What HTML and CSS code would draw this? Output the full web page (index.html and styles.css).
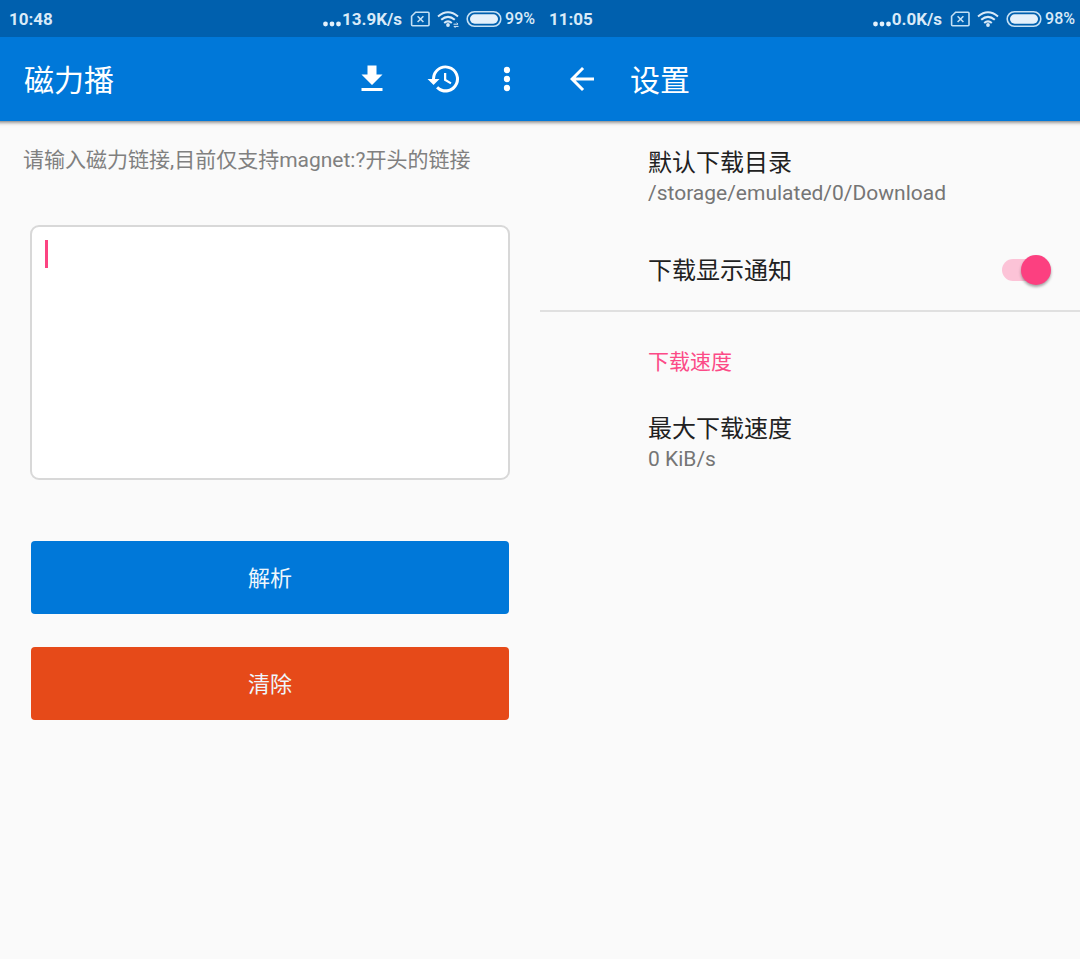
FILE: index.html
```html
<!DOCTYPE html>
<html lang="zh-CN">
<head>
<meta charset="utf-8">
<meta name="viewport" content="width=device-width, initial-scale=1">
<title>磁力播</title>
<link rel="stylesheet" href="styles.css">
</head>
<body>
<div class="screens">
  <section class="screen">
    <div class="status">
      <span class="status-text">10:48</span>
      <div class="status-right">
        <svg class="dots" viewBox="0 0 19 22" aria-hidden="true"><circle cx="3.5" cy="16" r="2.4"/><circle cx="10" cy="16" r="2.4"/><circle cx="16.5" cy="16" r="2.4"/></svg>
        <span class="status-text speed">13.9K/s</span>
        <svg class="sim" viewBox="0 0 20 22" aria-hidden="true"><path d="M5.6 4.3H18q1 0 1 1v11.4q0 1-1 1H2.6q-1 0-1-1V8.3Z"/><path d="m7.6 8.2 5.8 5.8m0-5.8-5.8 5.8"/></svg>
        <svg class="wifi" viewBox="0 0 22 22" aria-hidden="true"><path d="M1 8.4Q11 .2 21 8.4M4.2 11.8Q11 6 17.8 11.8M7.2 15Q11 11.8 14.8 15"/><circle cx="11" cy="17" r="1.9"/><path class="wifi-link" d="M16.5 16.2h4.5l-1.4-1.4M21.5 18.4H17l1.4 1.4"/></svg>
        <svg class="battery" viewBox="0 0 36 22" aria-hidden="true"><rect class="battery-shell" x="1.2" y="3.7" width="33.6" height="14.6" rx="7.3"/><rect class="battery-fill" x="4" y="6.3" width="28" height="9.4" rx="4.7"/></svg>
        <span class="status-text percent">99%</span>
      </div>
    </div>
    <header class="appbar">
      <h1 class="appbar-title">磁力播</h1>
      <div class="actions">
        <button class="action" aria-label="下载"><svg class="icon" viewBox="0 0 24 24"><path d="M19 9h-4V3H9v6H5l7 7zM5 18v2h14v-2z"/></svg></button>
        <button class="action" aria-label="历史"><svg class="icon" viewBox="0 0 24 24"><path d="M13 3a9 9 0 0 0-9 9H1l3.9 3.9.1.1L9 12H6a7 7 0 1 1 2.1 4.9l-1.4 1.5A9 9 0 1 0 13 3zm-1 5v5l4.3 2.5.7-1.2-3.5-2.1V8z"/></svg></button>
        <button class="action action-narrow" aria-label="更多"><svg class="icon" viewBox="0 0 24 24"><circle cx="12" cy="6" r="2.1"/><circle cx="12" cy="12" r="2.1"/><circle cx="12" cy="18" r="2.1"/></svg></button>
      </div>
    </header>
    <main class="form">
      <label class="hint" for="magnet">请输入磁力链接,目前仅支持magnet:?开头的链接</label>
      <div class="field">
        <textarea class="input" id="magnet"></textarea>
        <span class="caret"></span>
      </div>
      <button class="button button-parse">解析</button>
      <button class="button button-clear">清除</button>
    </main>
  </section>

  <section class="screen">
    <div class="status">
      <span class="status-text">11:05</span>
      <div class="status-right">
        <svg class="dots" viewBox="0 0 19 22" aria-hidden="true"><circle cx="3.5" cy="16" r="2.4"/><circle cx="10" cy="16" r="2.4"/><circle cx="16.5" cy="16" r="2.4"/></svg>
        <span class="status-text speed">0.0K/s</span>
        <svg class="sim" viewBox="0 0 20 22" aria-hidden="true"><path d="M5.6 4.3H18q1 0 1 1v11.4q0 1-1 1H2.6q-1 0-1-1V8.3Z"/><path d="m7.6 8.2 5.8 5.8m0-5.8-5.8 5.8"/></svg>
        <svg class="wifi" viewBox="0 0 22 22" aria-hidden="true"><path d="M1 8.4Q11 .2 21 8.4M4.2 11.8Q11 6 17.8 11.8M7.2 15Q11 11.8 14.8 15"/><circle cx="11" cy="17" r="1.9"/></svg>
        <svg class="battery" viewBox="0 0 36 22" aria-hidden="true"><rect class="battery-shell" x="1.2" y="3.7" width="33.6" height="14.6" rx="7.3"/><rect class="battery-fill" x="4" y="6.3" width="28" height="9.4" rx="4.7"/></svg>
        <span class="status-text percent">98%</span>
      </div>
    </div>
    <header class="appbar">
      <button class="back" aria-label="返回"><svg class="icon" viewBox="0 0 24 24"><path d="M20 11H7.8l5.6-5.6L12 4l-8 8 8 8 1.4-1.4L7.8 13H20z"/></svg></button>
      <h1 class="appbar-title">设置</h1>
    </header>
    <main class="settings">
      <div class="item item-first">
        <div class="item-title">默认下载目录</div>
        <div class="item-value">/storage/emulated/0/Download</div>
      </div>
      <div class="item item-switch">
        <label class="item-title" for="notify">下载显示通知</label>
        <input class="switch" id="notify" type="checkbox" role="switch" checked>
      </div>
      <h2 class="category">下载速度</h2>
      <div class="item">
        <div class="item-title">最大下载速度</div>
        <div class="item-value">0 KiB/s</div>
      </div>
    </main>
  </section>
</div>
</body>
</html>
```

FILE: styles.css
```css
* {
  box-sizing: border-box;
}

body {
  margin: 0;
  background: #fafafa;
  font-family: Roboto, "Noto Sans CJK SC", sans-serif;
  font-size: 21px;
  color: #212121;
}

button {
  border: 0;
  padding: 0;
  font-family: inherit;
  cursor: pointer;
}

.screens {
  display: grid;
  grid-template-columns: 1fr 1fr;
  min-height: 100vh;
}

/* Status bar */
.status {
  display: flex;
  align-items: center;
  justify-content: space-between;
  height: 37px;
  padding: 0 5px 0 9px;
  background: #0060ae;
  color: #d9eaf8;
}

.status-text {
  font-size: 17px;
  font-weight: 700;
  line-height: 22px;
  padding-top: 1px;
}

.status-right {
  display: flex;
  align-items: center;
}

.status-right svg {
  height: 22px;
  fill: none;
  stroke: #c4e0f4;
  stroke-width: 1.6;
}

.status-right .dots {
  width: 19px;
  fill: #e4f1fb;
  stroke: none;
}

.speed {
  margin: 0 8px 0 1px;
}

.status-right .sim {
  width: 20px;
}

.status-right .wifi {
  width: 22px;
  margin: 0 7px;
  stroke: #d9eaf8;
  stroke-width: 2;
}

.wifi circle {
  fill: #d9eaf8;
  stroke: none;
}

.wifi .wifi-link {
  stroke-width: 1;
}

.status-right .battery {
  width: 36px;
}

.battery .battery-fill {
  fill: #e4f1fb;
  stroke: none;
}

.percent {
  margin-left: 3px;
  font-weight: 500;
  font-size: 16px;
}

/* App bar */
.appbar {
  display: flex;
  align-items: center;
  height: 84px;
  padding: 0 6px 0 24px;
  background: #0078d9;
  box-shadow: 0 -3px 4px 4px rgba(0, 0, 0, 0.6);
  clip-path: inset(0 0 -8px 0);
  color: #fff;
}

.appbar-title {
  margin: 0;
  padding-top: 3px;
  font-size: 30px;
  font-weight: 400;
  line-height: 44px;
}

.actions {
  display: flex;
  margin-left: auto;
}

.action {
  display: grid;
  place-items: center;
  width: 72px;
  height: 72px;
  background: none;
}

.action-narrow {
  width: 54px;
}

.back {
  display: grid;
  width: 36px;
  height: 36px;
  margin-right: 30px;
  background: none;
}

.icon {
  width: 36px;
  height: 36px;
  fill: #fff;
}

/* Magnet form */
.form {
  display: flex;
  flex-direction: column;
  padding: 24px 31px;
}

.hint {
  margin: 0 -8px;
  line-height: 30px;
  color: #808080;
  white-space: nowrap;
}

.field {
  position: relative;
  display: grid;
  margin: 50px -1px 61px;
}

.input {
  height: 255px;
  padding: 14px;
  border: 2px solid #d8d8d8;
  border-radius: 9px;
  background: #fff;
  font: inherit;
  resize: none;
}

.caret {
  position: absolute;
  top: 15px;
  left: 15px;
  width: 3px;
  height: 28px;
  background: #fc4482;
}

.button {
  height: 73px;
  padding-bottom: 4px;
  border-radius: 4px;
  color: #eef6fc;
  font-size: 22px;
}

.button-parse {
  margin-bottom: 33px;
  background: #0078d9;
}

.button-clear {
  background: #e64a19;
}

/* Settings */
.settings {
  padding-top: 25px;
}

.item {
  padding-left: 108px;
}

.item-first {
  padding-bottom: 23px;
}

.item-title {
  font-size: 24px;
  line-height: 34px;
}

.item-value {
  line-height: 26px;
  color: #757575;
}

.item-switch {
  display: flex;
  align-items: center;
  justify-content: space-between;
  height: 83px;
  padding-right: 29px;
  border-bottom: 2px solid #e0e0e0;
}

.item-switch .item-title {
  padding-top: 3px;
}

.switch {
  appearance: none;
  display: flex;
  align-items: center;
  justify-content: flex-end;
  width: 49px;
  height: 22px;
  margin: 0;
  border-radius: 11px;
  background: linear-gradient(#fcc3d7, #fcc3d7) left / 40px 100% no-repeat;
}

.switch::before {
  content: "";
  width: 30px;
  height: 30px;
  flex: none;
  border-radius: 50%;
  background: #fc4080;
  box-shadow: 0 2px 3px rgba(0, 0, 0, 0.35);
}

.category {
  margin: 35px 0 35px 108px;
  font-size: 21px;
  font-weight: 400;
  line-height: 30px;
  color: #fc4a87;
}
```
